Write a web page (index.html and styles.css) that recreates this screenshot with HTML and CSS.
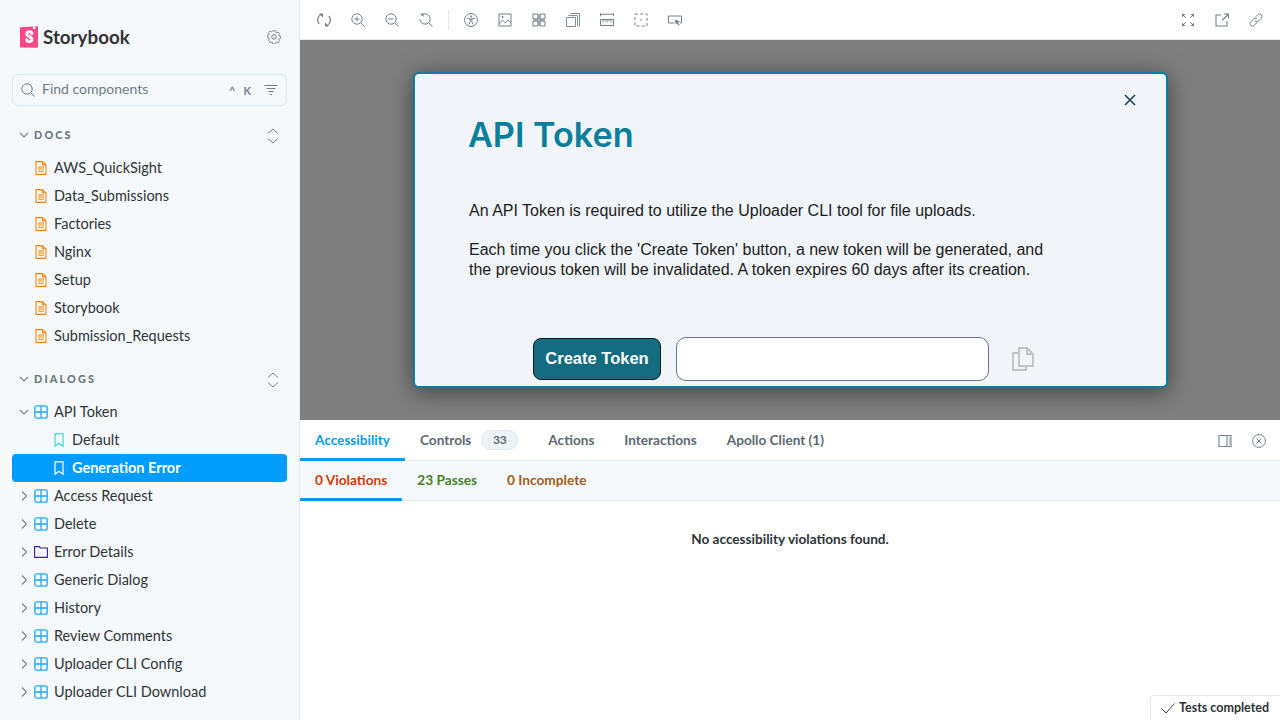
FILE: index.html
```html
<!DOCTYPE html>
<html lang="en">
<head>
    <meta charset="UTF-8">
    <title>Storybook</title>
    <link rel="stylesheet" href="styles.css">
</head>
<body>

<svg class="sprite" width="0" height="0">
    <symbol id="doc" viewBox="0 0 14 14"><path d="M2 .6h6.500L12 4v9.400H2z M8.500 .6V4H12 M4 6h6M4 8h6M4 10.200h6" fill="none" stroke="currentColor" stroke-width="1.100"/></symbol>
    <symbol id="grid" viewBox="0 0 14 14"><rect x=".8" y=".8" width="12.400" height="12.400" rx="2" fill="none" stroke="currentColor" stroke-width="1.300"/><path d="M7 1v12M1 7h12" stroke="currentColor" stroke-width="1.300"/></symbol>
    <symbol id="folder" viewBox="0 0 14 14"><path d="M.6 1.600h4.800l1 1.400h7V12.400H.6z" fill="none" stroke="currentColor" stroke-width="1.100"/></symbol>
    <symbol id="bookmark" viewBox="0 0 14 14"><path d="M3 .8h8v12.400L7 10.200l-4 3z" fill="none" stroke="currentColor" stroke-width="1.200"/></symbol>
    <symbol id="right" viewBox="0 0 14 14"><path d="M5 2.500L9.500 7 5 11.500" fill="none" stroke="currentColor" stroke-width="1.100"/></symbol>
    <symbol id="down" viewBox="0 0 14 14"><path d="M3 5L7 9 11 5" fill="none" stroke="currentColor" stroke-width="1.100"/></symbol>
    <symbol id="expand" viewBox="0 0 14 16"><path d="M2 5.500L7 1l5 4.500M2 10.500L7 15l5-4.500" fill="none" stroke="currentColor" stroke-width="1"/></symbol>
    <symbol id="sync" viewBox="0 0 14 14"><path d="M11.800 3A6.300 6.300 0 0 1 9.800 12.800M2.200 11A6.300 6.300 0 0 1 4.200 1.200" fill="none" stroke="currentColor" stroke-width="1.200"/><path d="M2 .5h4v4zM12 13.500H8v-4z" fill="currentColor"/></symbol>
    <symbol id="zoomin" viewBox="0 0 14 14"><circle cx="6" cy="6" r="5.200" fill="none" stroke="currentColor"/><path d="M9.800 9.800L13.500 13.500M3.500 6h5M6 3.500v5" fill="none" stroke="currentColor"/></symbol>
    <symbol id="zoomout" viewBox="0 0 14 14"><circle cx="6" cy="6" r="5.200" fill="none" stroke="currentColor"/><path d="M9.800 9.800L13.500 13.500M3.500 6h5" fill="none" stroke="currentColor"/></symbol>
    <symbol id="zoomreset" viewBox="0 0 14 14"><path d="M2.300 2.300A5.200 5.200 0 1 1 .8 6M9.800 9.800L13.500 13.500" fill="none" stroke="currentColor"/><path d="M1 .5h3.500v3.500z" fill="currentColor"/></symbol>
    <symbol id="a11y" viewBox="0 0 14 14"><circle cx="7" cy="7" r="6.500" fill="none" stroke="currentColor"/><circle cx="7" cy="3.500" r="1" fill="currentColor"/><path d="M3 5.200l3 .8h2l3-.8M6.200 6v2.500L5 11.500M7.800 6v2.500L9 11.500" fill="none" stroke="currentColor"/></symbol>
    <symbol id="photo" viewBox="0 0 14 14"><path d="M1 1h12v12H1z" fill="none" stroke="currentColor"/><path d="M1 11l3.500-4 3 3 2.500-3 3 3" fill="none" stroke="currentColor" stroke-width=".9"/><circle cx="4.500" cy="4" r="1" fill="currentColor"/></symbol>
    <symbol id="outline" viewBox="0 0 14 14"><path d="M1 1h5v5H1zM8 1h5v5H8zM1 8h5v5H1zM8 8h5v5H8z" fill="none" stroke="currentColor"/><path d="M1.500 5.500h11v3h-11z M5.500 1.500h3v11h-3z" fill="currentColor" opacity=".5"/></symbol>
    <symbol id="stack" viewBox="0 0 14 14"><path d="M.5 4.500h9v9h-9zM2.500 2.500h9v11M4.500 .5h9v13" fill="none" stroke="currentColor" stroke-width=".9"/></symbol>
    <symbol id="ruler" viewBox="0 0 14 14"><path d="M0 1.300h14M.5 .3v3M13.500 .3v3" stroke="currentColor" fill="none"/><path d="M.5 6.500h13v6h-13z" fill="none" stroke="currentColor"/><path d="M3 6.500v3M5 6.500v2M7 6.500v3M9 6.500v2M11 6.500v3" stroke="currentColor" fill="none" stroke-width=".9"/></symbol>
    <symbol id="dashed" viewBox="0 0 14 14"><path d="M1 1h12v12H1z" fill="none" stroke="currentColor" stroke-dasharray="3 2.250"/><circle cx="7" cy="7" r=".8" fill="currentColor"/></symbol>
    <symbol id="pointer" viewBox="0 0 14 14"><path d="M6.500 10H.5V3h13v7h-1.500" fill="none" stroke="currentColor"/><path d="M7 6.500l5 2-2 .9 1.700 2.300-1 .7-1.700-2.200-1.200 1.500z" fill="currentColor"/></symbol>
    <symbol id="fullscreen" viewBox="0 0 14 14"><path d="M1 1l4 4M13 1L9 5M1 13l4-4M13 13L9 9" stroke="currentColor" fill="none"/><path d="M1 1h3.500L1 4.500zM13 1H9.500L13 4.500zM1 13h3.500L1 9.500zM13 13H9.500L13 9.500z" fill="currentColor"/></symbol>
    <symbol id="share" viewBox="0 0 14 14"><path d="M6 2H1v11h11V8M7 7.500L13 1.500M9 1h4.500v4.500" fill="none" stroke="currentColor" stroke-width="1.100"/></symbol>
    <symbol id="link" viewBox="0 0 14 14"><path d="M6 4.500l2.800-2.800a2.400 2.400 0 0 1 3.500 3.500L9.500 8a2.400 2.400 0 0 1-3.300 0M8 9.500l-2.800 2.800a2.400 2.400 0 0 1-3.500-3.500L4.500 6a2.400 2.400 0 0 1 3.300 0" fill="none" stroke="currentColor"/></symbol>
    <symbol id="panelright" viewBox="0 0 14 14"><path d="M1 1.500h12v11H1zM9 1.500v11" fill="none" stroke="currentColor" stroke-width="1.100"/><path d="M11 4h1M11 6h1M11 8h1M11 10h1" stroke="currentColor"/></symbol>
    <symbol id="closecircle" viewBox="0 0 14 14"><circle cx="7" cy="7" r="6.400" fill="none" stroke="currentColor"/><path d="M4.500 4.500l5 5M9.500 4.500l-5 5" stroke="currentColor"/></symbol>
</svg>

<div class="app">
    <aside class="sidebar">
        <div class="brand">
            <svg class="logo" viewBox="0 0 18 22"><path d="M0 1.300L17 .2c.6 0 1 .4 1 1v19.600c0 .6-.5 1-1 1L1 21.500c-.5 0-1-.4-1-1z" fill="#ff4785"/><path d="M13 .4l-.1 2.700c0 .2.2.3.3.2l1-.8.900.7c.1.100.3 0 .3-.2L15.200.2z" fill="#fff"/><path d="M10.500 8.400c0 .4 2.700.2 3 0 0-2.700-1.400-4.100-4.100-4.100-2.600 0-4.100 1.400-4.100 3.500 0 3.700 5 3.800 5 5.800 0 .6-.3.900-.9.900-.8 0-1.100-.4-1.100-1.800 0-.3-3-.4-3.100 0-.2 3.300 1.800 4.300 4.200 4.300 2.300 0 4.100-1.200 4.100-3.500 0-3.900-5-3.800-5-5.700 0-.8.600-.9.900-.9.400 0 1.100.1 1.100 1.500z" fill="#fff"/></svg>
            <span class="brand-name">Storybook</span>
            <svg class="gear" viewBox="0 0 14 14"><path d="M5.800.7h2.400l.3 1.700 1.300.6 1.500-.9 1.600 1.700-.9 1.400.5 1.300 1.700.3v2.300l-1.700.4-.5 1.200.9 1.500-1.600 1.600-1.500-.9-1.300.6-.3 1.700H5.800l-.4-1.700-1.200-.6-1.500.9L1 11.200l.9-1.500-.5-1.200L-.3 8.100V5.800l1.700-.3.5-1.300L1 2.800l1.700-1.700 1.500.9 1.200-.6z" fill="none" stroke="currentColor" transform="translate(.5 0) scale(.93)"/><circle cx="7" cy="6.900" r="2.300" fill="none" stroke="currentColor"/></svg>
        </div>

        <div class="search">
            <svg class="search-icon" viewBox="0 0 14 14"><circle cx="6" cy="6" r="5.200" fill="none" stroke="currentColor"/><path d="M9.800 9.800L13.500 13.500" stroke="currentColor"/></svg>
            <span class="search-text">Find components</span>
            <span class="search-keys">^&nbsp;&nbsp;&nbsp;K</span>
            <svg class="search-filter" viewBox="0 0 14 14"><path d="M.5 2.500h13M2.500 5.500h9M4.500 8.500h5M6 11.500h2" stroke="currentColor" fill="none"/></svg>
        </div>

        <div class="section-head">
            <svg class="chev"><use href="#down"/></svg>
            <span class="section-name">Docs</span>
            <svg class="expand"><use href="#expand"/></svg>
        </div>
        <a class="row"><svg class="ico doc"><use href="#doc"/></svg>AWS_QuickSight</a>
        <a class="row"><svg class="ico doc"><use href="#doc"/></svg>Data_Submissions</a>
        <a class="row"><svg class="ico doc"><use href="#doc"/></svg>Factories</a>
        <a class="row"><svg class="ico doc"><use href="#doc"/></svg>Nginx</a>
        <a class="row"><svg class="ico doc"><use href="#doc"/></svg>Setup</a>
        <a class="row"><svg class="ico doc"><use href="#doc"/></svg>Storybook</a>
        <a class="row"><svg class="ico doc"><use href="#doc"/></svg>Submission_Requests</a>

        <div class="section-head second">
            <svg class="chev"><use href="#down"/></svg>
            <span class="section-name">Dialogs</span>
            <svg class="expand"><use href="#expand"/></svg>
        </div>
        <a class="row"><svg class="chev"><use href="#down"/></svg><svg class="ico comp"><use href="#grid"/></svg>API Token</a>
        <a class="row child"><svg class="ico story"><use href="#bookmark"/></svg>Default</a>
        <a class="row child selected"><svg class="ico story"><use href="#bookmark"/></svg>Generation Error</a>
        <a class="row"><svg class="chev"><use href="#right"/></svg><svg class="ico comp"><use href="#grid"/></svg>Access Request</a>
        <a class="row"><svg class="chev"><use href="#right"/></svg><svg class="ico comp"><use href="#grid"/></svg>Delete</a>
        <a class="row"><svg class="chev"><use href="#right"/></svg><svg class="ico fold"><use href="#folder"/></svg>Error Details</a>
        <a class="row"><svg class="chev"><use href="#right"/></svg><svg class="ico comp"><use href="#grid"/></svg>Generic Dialog</a>
        <a class="row"><svg class="chev"><use href="#right"/></svg><svg class="ico comp"><use href="#grid"/></svg>History</a>
        <a class="row"><svg class="chev"><use href="#right"/></svg><svg class="ico comp"><use href="#grid"/></svg>Review Comments</a>
        <a class="row"><svg class="chev"><use href="#right"/></svg><svg class="ico comp"><use href="#grid"/></svg>Uploader CLI Config</a>
        <a class="row"><svg class="chev"><use href="#right"/></svg><svg class="ico comp"><use href="#grid"/></svg>Uploader CLI Download</a>
    </aside>

    <main class="main">
        <div class="toolbar">
            <span class="tool"><svg><use href="#sync"/></svg></span>
            <span class="tool"><svg><use href="#zoomin"/></svg></span>
            <span class="tool"><svg><use href="#zoomout"/></svg></span>
            <span class="tool"><svg><use href="#zoomreset"/></svg></span>
            <span class="tool-sep"></span>
            <span class="tool"><svg><use href="#a11y"/></svg></span>
            <span class="tool"><svg><use href="#photo"/></svg></span>
            <span class="tool"><svg><use href="#outline"/></svg></span>
            <span class="tool"><svg><use href="#stack"/></svg></span>
            <span class="tool"><svg><use href="#ruler"/></svg></span>
            <span class="tool"><svg><use href="#dashed"/></svg></span>
            <span class="tool"><svg><use href="#pointer"/></svg></span>
            <span class="tool push"><svg><use href="#fullscreen"/></svg></span>
            <span class="tool"><svg><use href="#share"/></svg></span>
            <span class="tool"><svg><use href="#link"/></svg></span>
        </div>

        <div class="preview">
            <div class="dialog">
                <svg class="dialog-close" viewBox="0 0 12 12"><path d="M1 1l10 10M11 1L1 11" stroke="currentColor" stroke-width="1.600"/></svg>
                <h2>API Token</h2>
                <p>An API Token is required to utilize the Uploader CLI tool for file uploads.</p>
                <p>Each time you click the 'Create Token' button, a new token will be generated, and the previous token will be invalidated. A token expires 60 days after its creation.</p>
                <div class="token-row">
                    <button class="btn">Create Token</button>
                    <input class="token-input" type="text">
                    <svg class="copy" viewBox="0 0 22 24"><path d="M7 1h8l6 6v12H7z M15 1v6h6" fill="none" stroke="currentColor" stroke-width="2"/><path d="M7 6H1v17h13v-4" fill="none" stroke="currentColor" stroke-width="2"/></svg>
                </div>
            </div>
        </div>

        <div class="panel">
            <div class="tabs">
                <span class="tab active">Accessibility</span>
                <span class="tab">Controls<span class="badge">33</span></span>
                <span class="tab">Actions</span>
                <span class="tab">Interactions</span>
                <span class="tab">Apollo Client (1)</span>
                <span class="tool push"><svg><use href="#panelright"/></svg></span>
                <span class="tool"><svg><use href="#closecircle"/></svg></span>
            </div>
            <div class="subtabs">
                <span class="tab active red">0 Violations</span>
                <span class="tab green">23 Passes</span>
                <span class="tab orange">0 Incomplete</span>
            </div>
            <p class="empty">No accessibility violations found.</p>
            <div class="status">
                <svg viewBox="0 0 14 14"><path d="M.5 7.500L5 12 13.500 2.500" fill="none" stroke="currentColor"/></svg>
                Tests completed
            </div>
        </div>
    </main>
</div>

</body>
</html>
```

FILE: styles.css
```css
* {
    box-sizing: border-box;
}
html, body {
    margin: 0;
    height: 100%;
    overflow: hidden;
}
body {
    font-family: Lato, "Noto Sans", sans-serif;
    font-size: 14px;
    color: #2e3438;
    background-color: #fff;
}
.sprite {
    position: absolute;
}
.app {
    display: flex;
    height: 720px;
}

/* sidebar */
.sidebar {
    width: 300px;
    flex: none;
    padding: 0 12px;
    background-color: #f6f9fc;
    border-right: 1px solid #e4e9ee;
    overflow: hidden;
}
.brand {
    display: flex;
    align-items: center;
    height: 74px;
    padding: 0 6px 0 8px;
}
.logo {
    width: 18px;
    height: 22px;
    margin-right: 5px;
}
.brand-name {
    font-size: 18.800px;
    font-weight: 700;
    color: #333;
    margin-bottom: 2px;
}
.gear {
    width: 14px;
    height: 14px;
    margin-left: auto;
    color: #73828c;
}
.search {
    display: flex;
    align-items: center;
    height: 32px;
    padding: 0 8px;
    border: 1px solid #d9e7f2;
    border-radius: 6px;
    color: #6f7b85;
}
.search-icon {
    width: 14px;
    height: 14px;
    margin-right: 7px;
}
.search-text {
    font-size: 14px;
    flex: 1;
    margin-bottom: 3px;
}
.search-keys {
    font-size: 11px;
    font-weight: 700;
    margin-right: 13px;
    color: #73828c;
}
.search-filter {
    width: 14px;
    height: 14px;
}
.section-head {
    display: flex;
    align-items: center;
    height: 28px;
    margin-top: 15px;
    margin-bottom: 5px;
    padding-left: 5px;
}
.section-name {
    font-size: 10.800px;
    font-weight: 900;
    letter-spacing: .2em;
    text-transform: uppercase;
    color: #6b7780;
    margin-left: 3px;
    margin-bottom: 2px;
}
.chev {
    width: 14px;
    height: 14px;
    flex: none;
    color: #73828c;
}
.expand {
    width: 14px;
    height: 16px;
    margin-left: auto;
    margin-right: 7px;
    margin-top: 2px;
    color: #73828c;
}
.row {
    display: flex;
    align-items: center;
    height: 28px;
    padding-left: 22px;
    padding-bottom: 2px;
    font-size: 14.500px;
    color: #2e3438;
    border-radius: 4px;
}
.row svg {
    margin-top: 2px;
}
.row .chev {
    margin-left: -17px;
    margin-right: 3px;
}
.ico {
    width: 14px;
    height: 14px;
    flex: none;
    margin-right: 6px;
}
.doc {
    color: #ff8300;
}
.comp {
    color: #1ea7fd;
}
.fold {
    color: #3f1d96;
}
.story {
    color: #37d5d3;
    margin-right: 6px;
}
.row.child {
    padding-left: 40px;
}
.row.selected {
    background-color: #029cfd;
    color: #fff;
    font-weight: 700;
}
.row.selected .story {
    color: #fff;
}

/* main */
.main {
    flex: 1;
    display: flex;
    flex-direction: column;
    min-width: 0;
}
.toolbar {
    display: flex;
    align-items: center;
    flex: none;
    height: 40px;
    padding: 0 10px;
    background-color: #fff;
    border-bottom: 1px solid #e4e9ee;
}
.tool {
    display: flex;
    align-items: center;
    justify-content: center;
    width: 28px;
    height: 28px;
    margin-right: 6px;
    color: #73828c;
}
.tool:last-child {
    margin-right: 0;
}
.tool svg {
    width: 14px;
    height: 14px;
}
.tool-sep {
    width: 1px;
    height: 20px;
    margin: 0 8px 0 2px;
    background-color: #e4e9ee;
}
.push {
    margin-left: auto;
}

/* story preview */
.preview {
    flex: none;
    height: 380px;
    display: flex;
    justify-content: center;
    padding: 32px 0 0 1px;
    background-color: #7f7f7f;
    overflow: hidden;
}
.dialog {
    position: relative;
    width: 755px;
    height: 316px;
    padding: 0 54px;
    background-color: #f1f5fa;
    border: 2px solid #0a7f9b;
    border-radius: 6px;
    font-family: "Liberation Sans", Arial, sans-serif;
    font-size: 16px;
    line-height: 20px;
    color: #1c1c1c;
    box-shadow: 0 4px 24px rgba(0, 0, 0, .5);
}
.dialog h2 {
    margin: 36px 0 41px -1px;
    font-family: Inter, sans-serif;
    font-size: 34.200px;
    line-height: 50px;
    font-weight: 600;
    color: #0a7f9b;
}
.dialog p {
    margin: 0 0 19px;
    max-width: 590px;
}
.dialog-close {
    position: absolute;
    top: 20px;
    right: 30px;
    width: 12px;
    height: 12px;
    color: #243c5a;
}
.token-row {
    display: flex;
    align-items: center;
    margin: 57px 0 0 64px;
}
.btn {
    width: 128px;
    height: 42px;
    padding: 0 0 2px;
    font-family: "Liberation Sans", Arial, sans-serif;
    font-size: 16.500px;
    font-weight: 700;
    color: #fff;
    background-color: #156c80;
    border: 1px solid #0d1a20;
    border-radius: 8px;
}
.token-input {
    width: 313px;
    height: 44px;
    margin-left: 15px;
    background-color: #fff;
    border: 1px solid #6b7090;
    border-radius: 10px;
}
.copy {
    width: 22px;
    height: 24px;
    margin-left: 23px;
    color: #c4c4c4;
}

/* addon panel */
.panel {
    position: relative;
    flex: 1;
    background-color: #fff;
}
.tabs,
.subtabs {
    display: flex;
    align-items: stretch;
    height: 41px;
    border-bottom: 1px solid #e4e9ee;
}
.tabs {
    align-items: center;
    padding: 1px 7px 0 0;
}
.subtabs {
    height: 40px;
    background-color: #f6f9fc;
}
.tab {
    display: flex;
    align-items: center;
    align-self: stretch;
    padding: 0 15px;
    font-size: 13.600px;
    font-weight: 700;
    color: #5c6870;
    margin-bottom: -1px;
    border-bottom: 3px solid transparent;
}
.subtabs .tab {
    font-size: 13.700px;
}
.tab.active {
    color: #029cfd;
    border-bottom-color: #029cfd;
}
.subtabs .tab.active {
    color: #d43900;
}
.tab.green {
    color: #448028;
}
.tab.orange {
    color: #a15c20;
}
.badge {
    display: inline-block;
    width: 37px;
    height: 20px;
    margin-left: 10px;
    font-size: 12px;
    line-height: 18px;
    text-align: center;
    color: #5c6870;
    background-color: #eef3f8;
    border: 1px solid #dde4ec;
    border-radius: 10px;
}
.empty {
    margin: 30px 0 0;
    text-align: center;
    font-size: 13.600px;
    font-weight: 700;
}
.status {
    position: absolute;
    right: 0;
    bottom: 0;
    display: flex;
    align-items: center;
    width: 130px;
    height: 25px;
    padding: 0 0 1px 10px;
    background-color: #fff;
    border: 1px solid #e4e9ee;
    border-width: 1px 0 0 1px;
    border-top-left-radius: 4px;
    font-size: 12.500px;
    font-weight: 700;
}
.status svg {
    width: 14px;
    height: 14px;
    margin-right: 4px;
    color: #444;
}
```
